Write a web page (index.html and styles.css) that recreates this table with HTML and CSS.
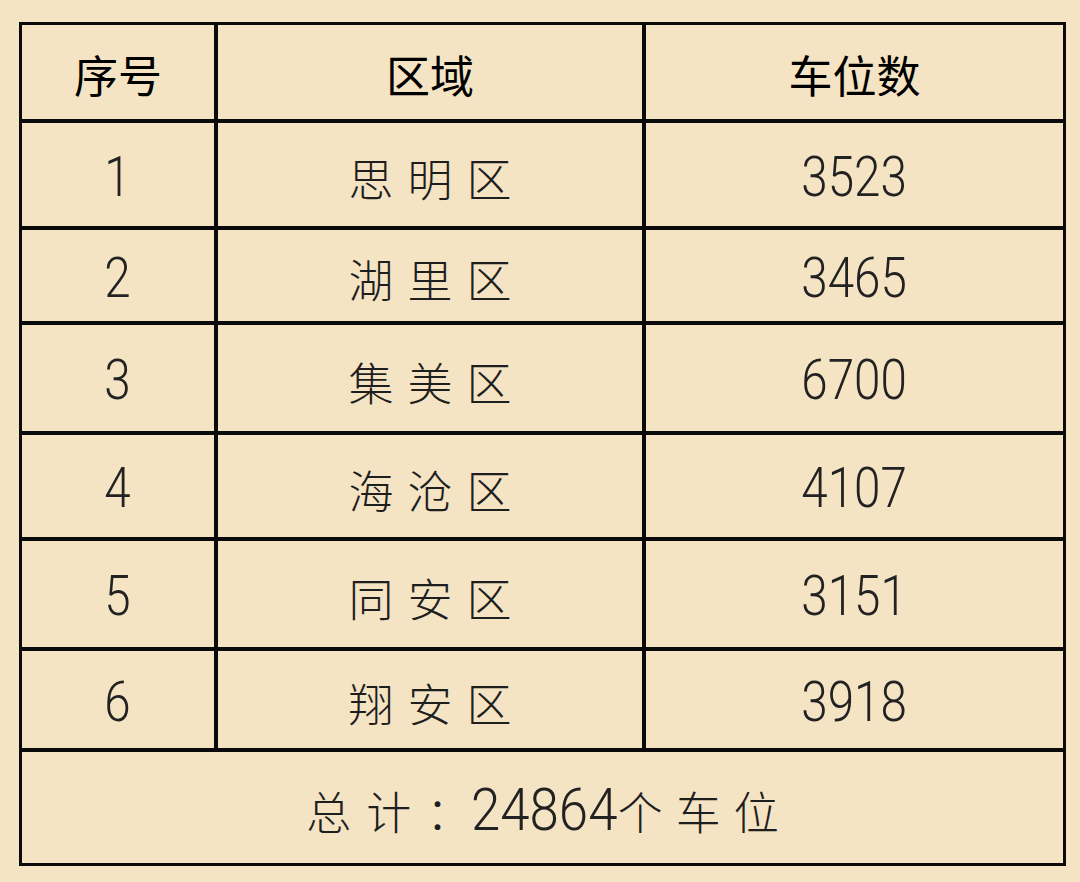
FILE: index.html
```html
<!DOCTYPE html>
<html lang="zh-CN">
<head>
<meta charset="utf-8">
<title>厦门各区车位数</title>
<link rel="stylesheet" href="styles.css">
</head>
<body>
<div class="sheet" role="table">
  <div class="cell head" role="columnheader">序号</div>
  <div class="cell head" role="columnheader">区域</div>
  <div class="cell head last" role="columnheader">车位数</div>

  <div class="cell"><span class="num">1</span></div>
  <div class="cell"><span class="cjk">思明区</span></div>
  <div class="cell last"><span class="num">3523</span></div>

  <div class="cell"><span class="num">2</span></div>
  <div class="cell"><span class="cjk">湖里区</span></div>
  <div class="cell last"><span class="num">3465</span></div>

  <div class="cell"><span class="num">3</span></div>
  <div class="cell"><span class="cjk">集美区</span></div>
  <div class="cell last"><span class="num">6700</span></div>

  <div class="cell"><span class="num">4</span></div>
  <div class="cell"><span class="cjk">海沧区</span></div>
  <div class="cell last"><span class="num">4107</span></div>

  <div class="cell"><span class="num">5</span></div>
  <div class="cell"><span class="cjk">同安区</span></div>
  <div class="cell last"><span class="num">3151</span></div>

  <div class="cell"><span class="num">6</span></div>
  <div class="cell"><span class="cjk">翔安区</span></div>
  <div class="cell last"><span class="num">3918</span></div>

  <div class="cell total"><span class="cjk lead">总计</span><span class="cjk colon">：</span><span class="num big">24864</span><span class="cjk tail">个车位</span></div>
</div>
</body>
</html>
```

FILE: styles.css
```css
html, body {
  margin: 0;
  padding: 0;
  background: #f5e4c4;
}

body {
  width: 1080px;
  height: 882px;
  overflow: hidden;
  padding-top: 22px;
  padding-left: 19px;
  box-sizing: border-box;
}

.sheet {
  width: 1047px;
  box-sizing: border-box;
  border: 3px solid #0a0a0a;
  display: grid;
  grid-template-columns: 196px 428px 1fr;
  grid-template-rows: 98px 107px 95px 110px 106px 110px 101px 111px;
}

.cell {
  box-sizing: border-box;
  border-right: 4px solid #0a0a0a;
  border-bottom: 4px solid #0a0a0a;
  display: flex;
  align-items: center;
  justify-content: center;
  color: #262626;
}

.cell.last {
  border-right: none;
}

.head {
  font-family: "Noto Sans CJK SC", "Noto Sans", sans-serif;
  font-weight: 400;
  font-size: 44px;
  color: #000;
  padding-top: 4px;
}

.cjk {
  font-family: "Noto Sans CJK SC", sans-serif;
  font-weight: 300;
  font-size: 45px;
  letter-spacing: 14px;
  padding-left: 14px;
  color: #1e1e1e;
  display: inline-block;
  padding-top: 6px;
}

.num {
  font-family: Roboto, "Noto Sans", sans-serif;
  font-weight: 300;
  font-size: 56px;
  color: #222;
  display: inline-block;
  transform: scaleX(0.85);
  padding-top: 4px;
}

.total {
  grid-column: 1 / -1;
  border-right: none;
  border-bottom: none;
  padding-left: 0;
}

.total .cjk {
  padding-left: 0;
}

.total .lead {
  letter-spacing: 15px;
}

.total .colon {
  letter-spacing: 0;
}

.total .num.big {
  font-size: 60px;
  transform: scaleX(0.88);
  margin: 0 -10px;
  letter-spacing: 0;
}

.total .tail {
  letter-spacing: 13px;
  margin-right: -13px;
}
```
